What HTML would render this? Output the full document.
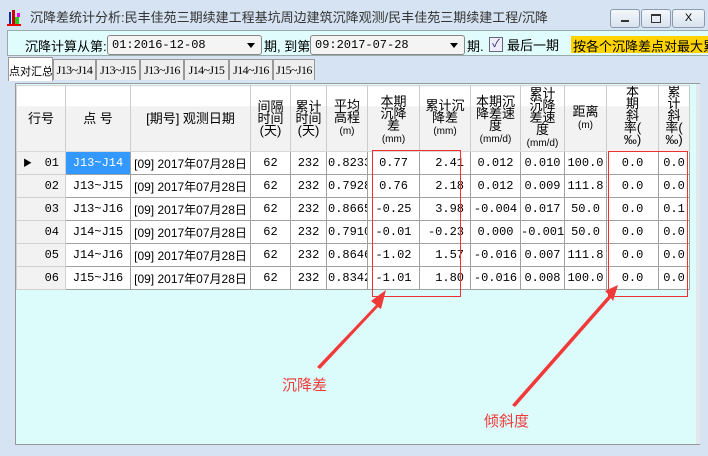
<!DOCTYPE html>
<html><head><meta charset="utf-8"><style>
*{margin:0;padding:0;box-sizing:border-box}
body{width:708px;height:456px;background:#d6e3f2;font-family:"Liberation Sans","Noto Sans CJK SC",sans-serif;font-size:12px;position:relative;overflow:hidden;color:#000}
.abs{position:absolute}
.title{left:30px;top:7px;font-size:13px;color:#333;white-space:nowrap}
.wb{top:9px;width:30px;height:19px;border:1px solid #8a9ab0;border-radius:3px;background:linear-gradient(#f4f7fb,#d8e2ee)}
.bar{left:7px;top:30px;width:701px;height:26px;background:#e0fcfc;border:1px solid #9aa;border-right:none}
.combo{top:35px;height:20px;background:#f4f4f4;border:1px solid #888;border-radius:3px;font-size:12px;padding:2px 4px;font-family:"Liberation Mono","Noto Sans CJK SC",monospace;white-space:nowrap}
.combo:after{content:"";position:absolute;right:6px;top:7px;border:4px solid transparent;border-top:5px solid #000}
.tab{top:59px;height:21px;border:1px solid #999;border-bottom:none;background:#eee;font-size:12px;letter-spacing:-0.6px;padding:3px 0 0;text-align:center;white-space:nowrap;overflow:hidden;font-family:"Liberation Serif","Noto Sans CJK SC",serif}
.grid{left:15px;top:83px;width:685px;height:362px;background:#dcfcfc;border:1px solid #999}
table{position:absolute;left:0;top:1px;border-collapse:collapse;background:#fff;table-layout:fixed;width:673px}
td{border:1px solid #a0a0a0;height:23px;text-align:center;font-family:"Liberation Mono","Noto Sans CJK SC",monospace;font-size:12px;white-space:nowrap;overflow:hidden;padding:0}
td.d{font-family:"Liberation Sans","Noto Sans CJK SC",sans-serif;font-size:12px}
th{border:1px solid #d8d8d8;border-right:1px solid #ccc;height:66px;background:linear-gradient(#fff 0,#fff 30%,#f2f2f2 31%);font-weight:normal;font-size:13px;line-height:12px;overflow:hidden;padding:0}
th small{font-size:10px}
td.rn{background:#f2f2f2;text-align:right;padding-right:6px;border-color:#d0d0d0}
.r{text-align:right;padding-right:6px}
.l{text-align:left;padding-left:1px}
.red{position:absolute;border:1px solid #f03030}
.lab{color:#f03a3a;font-size:15px}
</style></head><body>
<svg class="abs" style="left:6px;top:8px" width="16" height="18"><rect x="1" y="16" width="14" height="2" fill="#e00"/><rect x="3" y="4" width="2" height="12" fill="#1a2aa0"/><rect x="6" y="2" width="3" height="14" fill="#c00"/><rect x="9" y="9" width="4" height="7" fill="#2c2"/><rect x="11" y="5" width="3" height="4" fill="#e0e"/></svg>
<div class="abs title">沉降差统计分析:民丰佳苑三期续建工程基坑周边建筑沉降观测/民丰佳苑三期续建工程/沉降</div>
<div class="abs wb" style="left:610px"><div class="abs" style="left:10px;top:10px;width:8px;height:2px;background:#333"></div></div>
<div class="abs wb" style="left:641px"><div class="abs" style="left:9px;top:4px;width:10px;height:9px;border:1px solid #333;border-top-width:2px"></div></div>
<div class="abs wb" style="left:672px;width:33px;font-size:11px;text-align:center;line-height:17px">X</div>
<div class="abs bar"></div>
<div class="abs" style="left:25px;top:36px;font-size:13px;white-space:nowrap">沉降计算从第:</div>
<div class="abs combo" style="left:107px;width:155px">01:2016-12-08</div>
<div class="abs" style="left:264px;top:36px;font-size:13px;white-space:nowrap">期, 到第</div>
<div class="abs combo" style="left:310px;width:155px">09:2017-07-28</div>
<div class="abs" style="left:467px;top:36px;font-size:13px">期.</div>
<div class="abs" style="left:489px;top:37px;width:14px;height:15px;border:1px solid #667;background:#eef;font-size:11px;line-height:13px;text-align:center;color:#226">✓</div>
<div class="abs" style="left:507px;top:35px;font-size:13px;white-space:nowrap">最后一期</div>
<div class="abs" style="left:571px;top:36px;height:17px;width:137px;background:#ffd400;font-size:13px;padding:0 2px;white-space:nowrap;overflow:hidden">按各个沉降差点对最大累</div>
<div class="abs tab" style="left:8px;top:57px;height:24px;background:#fff;font-size:11px;letter-spacing:0;width:45px;padding-top:5px;font-family:'Liberation Sans','Noto Sans CJK SC',sans-serif">点对汇总</div>
<div class="abs tab" style="left:53px;width:43px">J13~J14</div>
<div class="abs tab" style="left:96px;width:44px">J13~J15</div>
<div class="abs tab" style="left:140px;width:44px">J13~J16</div>
<div class="abs tab" style="left:184px;width:45px">J14~J15</div>
<div class="abs tab" style="left:229px;width:44px">J14~J16</div>
<div class="abs tab" style="left:273px;width:42px">J15~J16</div>
<div class="grid abs">
<div class="abs" style="left:680px;top:0;width:4px;height:360px;background:#e4e8ec"></div>
<table>
<colgroup><col style="width:49px"><col style="width:65px"><col style="width:120px"><col style="width:40px"><col style="width:36px"><col style="width:41px"><col style="width:52px"><col style="width:51px"><col style="width:50px"><col style="width:44px"><col style="width:42px"><col style="width:52px"><col style="width:31px"></colgroup>
<tr><th>行号</th><th>点 号</th><th>[期号] 观测日期</th><th>间隔<br>时间<br>(天)</th><th>累计<br>时间<br>(天)</th><th>平均<br>高程<br><small>(m)</small></th><th style="vertical-align:top;padding-top:10px">本期<br>沉降<br>差<br><small>(mm)</small></th><th>累计沉<br>降差<br><small>(mm)</small></th><th style="vertical-align:top;padding-top:10px">本期沉<br>降差速<br>度<br><small>(mm/d)</small></th><th>累计<br>沉降<br>差速<br>度<br><small>(mm/d)</small></th><th>距离<br><small>(m)</small></th><th style="vertical-align:top">本<br>期<br>斜<br>率(<br>‰)</th><th style="vertical-align:top">累<br>计<br>斜<br>率(<br>‰)</th></tr>
<tr><td class="rn"><span style="float:left;margin-left:6px;font-size:9px">▶</span>01</td><td style="background:#3399ff;color:#fff">J13~J14</td><td class="d">[09] 2017年07月28日</td><td>62</td><td>232</td><td class="l">0.82331</td><td>0.77</td><td class="r">2.41</td><td>0.012</td><td>0.010</td><td>100.0</td><td>0.0</td><td>0.0</td></tr>
<tr><td class="rn">02</td><td>J13~J15</td><td class="d">[09] 2017年07月28日</td><td>62</td><td>232</td><td class="l">0.79285</td><td>0.76</td><td class="r">2.18</td><td>0.012</td><td>0.009</td><td>111.8</td><td>0.0</td><td>0.0</td></tr>
<tr><td class="rn">03</td><td>J13~J16</td><td class="d">[09] 2017年07月28日</td><td>62</td><td>232</td><td class="l">0.86654</td><td>-0.25</td><td class="r">3.98</td><td>-0.004</td><td>0.017</td><td>50.0</td><td>0.0</td><td>0.1</td></tr>
<tr><td class="rn">04</td><td>J14~J15</td><td class="d">[09] 2017年07月28日</td><td>62</td><td>232</td><td class="l">0.79100</td><td>-0.01</td><td class="r">-0.23</td><td>0.000</td><td>-0.001</td><td>50.0</td><td>0.0</td><td>0.0</td></tr>
<tr><td class="rn">05</td><td>J14~J16</td><td class="d">[09] 2017年07月28日</td><td>62</td><td>232</td><td class="l">0.86468</td><td>-1.02</td><td class="r">1.57</td><td>-0.016</td><td>0.007</td><td>111.8</td><td>0.0</td><td>0.0</td></tr>
<tr><td class="rn">06</td><td>J15~J16</td><td class="d">[09] 2017年07月28日</td><td>62</td><td>232</td><td class="l">0.83423</td><td>-1.01</td><td class="r">1.80</td><td>-0.016</td><td>0.008</td><td>100.0</td><td>0.0</td><td>0.0</td></tr>
</table>
</div>
<div class="red" style="left:372px;top:150px;width:89px;height:147px"></div>
<div class="red" style="left:608px;top:151px;width:80px;height:146px"></div>
<svg class="abs" style="left:0;top:0" width="708" height="456"><g fill="#f03a3a"><polygon points="317,367 376,305 371,301 386,290 381,309 378,307 320,369"/><polygon points="512,405 609,295 605,291 618,285 613,301 611,298 515,407"/></g></svg>
<div class="abs lab" style="left:282px;top:374px">沉降差</div>
<div class="abs lab" style="left:484px;top:410px">倾斜度</div>
</body></html>
